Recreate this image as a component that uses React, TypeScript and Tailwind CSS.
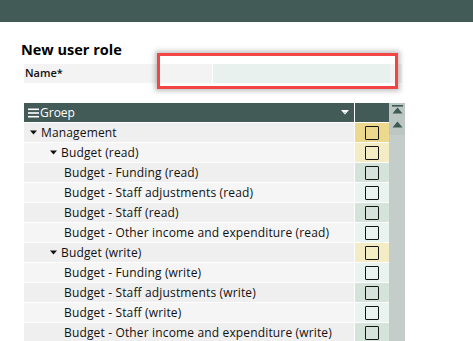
import { ReactNode } from "react";

type Row = {
  label: string;
  level: 0 | 1 | 2;
};

const rows: Row[] = [
  { label: "Management", level: 0 },
  { label: "Budget (read)", level: 1 },
  { label: "Budget - Funding (read)", level: 2 },
  { label: "Budget - Staff adjustments (read)", level: 2 },
  { label: "Budget - Staff (read)", level: 2 },
  { label: "Budget - Other income and expenditure (read)", level: 2 },
  { label: "Budget (write)", level: 1 },
  { label: "Budget - Funding (write)", level: 2 },
  { label: "Budget - Staff adjustments (write)", level: 2 },
  { label: "Budget - Staff (write)", level: 2 },
  { label: "Budget - Other income and expenditure (write)", level: 2 },
];

const Caret = () => (
  <svg width="7" height="5" viewBox="0 0 7 5" className="shrink-0">
    <path d="M0 0.5 L7 0.5 L3.5 4.5 Z" fill="#111" />
  </svg>
);

const CheckBox = () => (
  <div className="w-[14px] h-[14px] border-[1.5px] border-[#161616] rounded-[1px]" />
);

const Cell = ({ className, children }: { className: string; children?: ReactNode }) => (
  <div className={className}>{children}</div>
);

const App = () => {
  const getCheckColor = (row: Row, index: number) => {
    if (row.level === 0) return "bg-[#ecd98e]";
    if (row.level === 1) return "bg-[#f4ecc4]";
    return index % 2 === 0 ? "bg-[#d5e4da]" : "bg-[#e9f3ef]";
  };

  return (
    <div
      className="relative h-[341px] overflow-hidden bg-white text-[#111]"
      style={{ fontFamily: '"Open Sans", "Noto Sans", sans-serif' }}
    >
      <div className="h-[22px] bg-[#435b57]" />

      <h1 className="ml-[21px] mt-[19px] text-[14.5px] leading-[18px] font-bold text-black">
        New user role
      </h1>

      {/* Name field */}
      <div className="ml-[24px] mt-[5px] w-[378px] h-[19px] flex bg-[#f3f3f3]">
        <div className="w-[188px] pl-[1px] flex items-center text-[11px] font-semibold">Name*</div>
        <div className="w-[178px] bg-[#e8f1ed] border-l border-white" />
      </div>

      {/* Permissions table */}
      <div className="ml-[24px] mt-[20px] flex">
        <div className="w-[365px] flex flex-col gap-[1px]">
          <div className="flex gap-[1px] h-[19px]">
            <div className="w-[330px] bg-[#435b57] flex items-center pl-[4px] pr-[4px] text-white text-[12px] font-medium">
              <svg width="11" height="10" viewBox="0 0 11 10" className="mr-[1px]">
                <rect x="0" y="0.5" width="11" height="1.6" fill="#fff" />
                <rect x="0" y="4.2" width="11" height="1.6" fill="#fff" />
                <rect x="0" y="7.9" width="11" height="1.6" fill="#fff" />
              </svg>
              <span>Groep</span>
              <svg width="8" height="5" viewBox="0 0 8 5" className="ml-auto mr-[1px]">
                <path d="M0 0 L8 0 L4 4.5 Z" fill="#fff" />
                <path d="M2 2 L6 2 L4 4.5 Z" fill="#c9d6e6" />
              </svg>
            </div>
            <div className="w-[34px] bg-[#435b57]" />
          </div>

          {rows.map((row, index) => (
            <div key={index} className="flex gap-[1px] h-[19px]">
              <Cell
                className={
                  "w-[330px] flex items-center text-[12px] font-medium tracking-[0.15px] whitespace-nowrap " +
                  (index % 2 === 0 ? "bg-[#efefef]" : "bg-[#f5f5f5]") +
                  (row.level === 0 ? " pl-[6px]" : row.level === 1 ? " pl-[26px]" : " pl-[40px]")
                }
              >
                {row.level < 2 && <Caret />}
                <span className={row.level < 2 ? "ml-[4px]" : ""}>{row.label}</span>
              </Cell>
              <Cell className={"w-[34px] flex items-center justify-center " + getCheckColor(row, index)}>
                <CheckBox />
              </Cell>
            </div>
          ))}
        </div>

        {/* Scrollbar */}
        <div className="w-[16px] h-[240px] bg-[#c5cdcb] flex flex-col">
          <div className="h-[32px] bg-[#bcc7c4] flex flex-col items-center pt-[2px] gap-[7px]">
            <svg width="11" height="9" viewBox="0 0 11 9">
              <rect x="0" y="0" width="11" height="1.6" fill="#3e5a54" />
              <path d="M0.5 8.5 L10.5 8.5 L5.5 2.5 Z" fill="#3e5a54" />
            </svg>
            <svg width="11" height="7" viewBox="0 0 11 7">
              <path d="M0.5 6.5 L10.5 6.5 L5.5 0.5 Z" fill="#3e5a54" />
            </svg>
          </div>
        </div>
      </div>

      {/* Highlight annotation */}
      <div className="absolute left-[157px] top-[53px] w-[241px] h-[36px] border-[3px] border-[#f24646] shadow-[0_0_5px_2px_rgba(0,0,0,0.25)]" />
    </div>
  );
};

export default App;
